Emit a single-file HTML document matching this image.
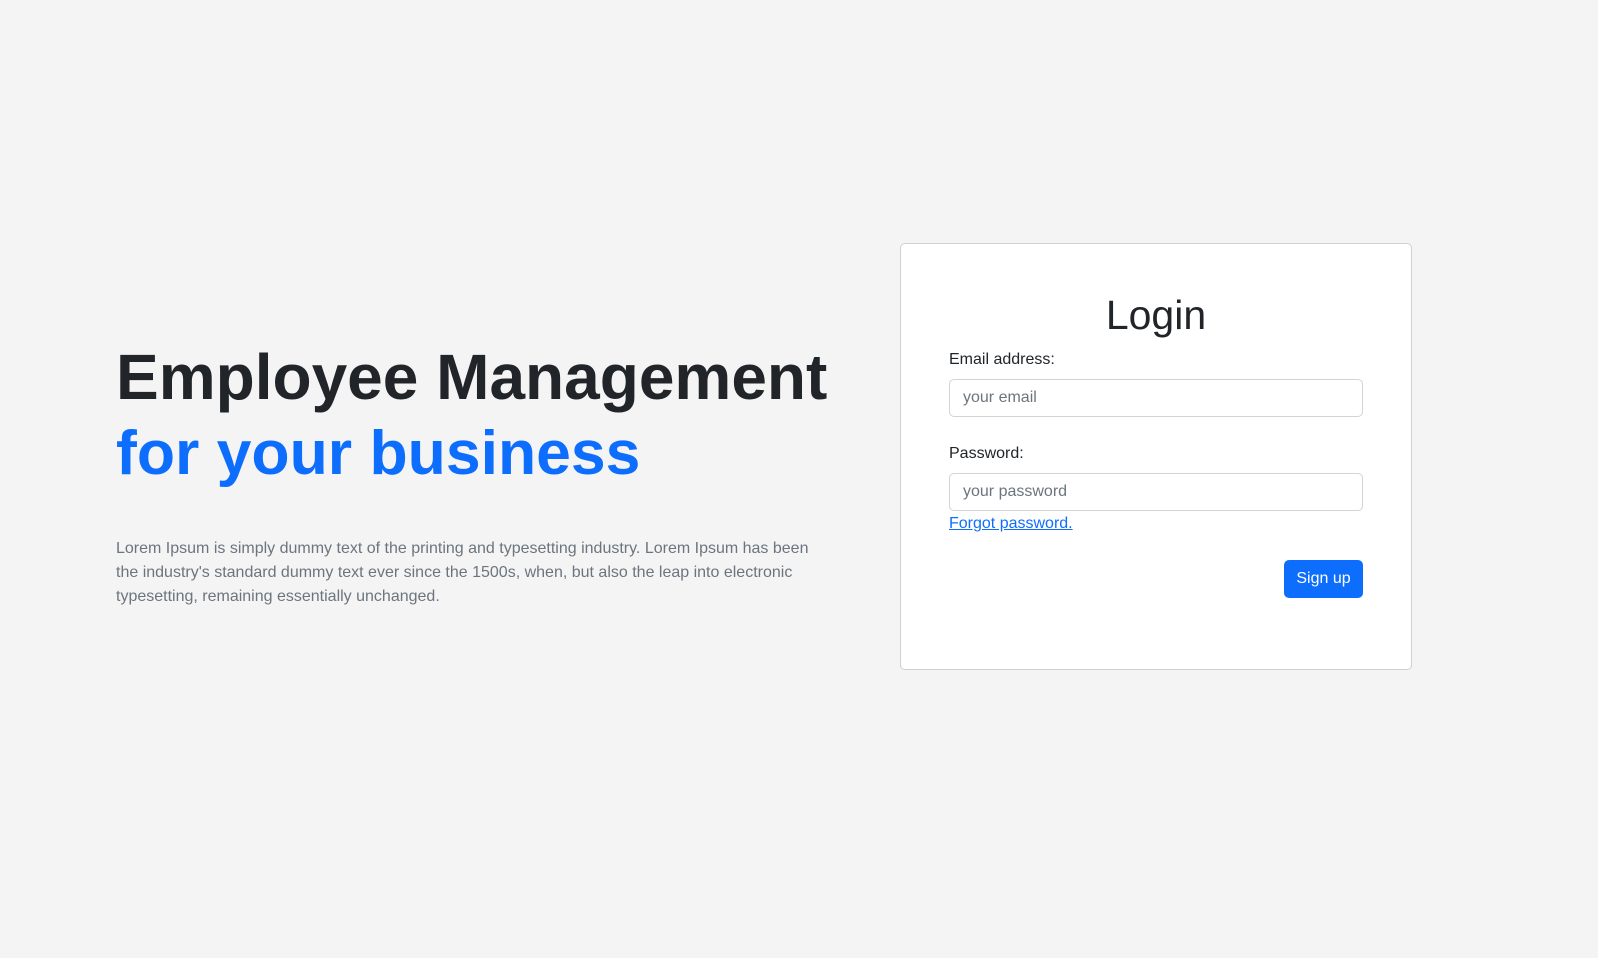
<!DOCTYPE html>
<html><head><style>
body{margin:0;width:1598px;height:972px;background:#fff;font-family:"Liberation Sans",sans-serif;position:relative;overflow:hidden}
.bg{position:absolute;left:0;top:0;width:1598px;height:958px;background:#f4f4f4}
.a{position:absolute;white-space:nowrap}
h1{margin:0;font-weight:bold;font-size:64px;line-height:76px;color:#212529}
.card{position:absolute;left:900px;top:243px;width:510px;height:425px;background:#fff;border:1px solid #d0d0d0;border-radius:5px}
.inp{position:absolute;left:949px;height:36px;border:1px solid #ced4da;border-radius:5px;background:#fff;color:#6c757d;font-size:16px;line-height:36px;padding-left:13px;width:399px}
.lbl{position:absolute;left:949px;font-size:16px;color:#212529}
</style></head><body>
<div class="bg"></div>
<h1 class="a" style="left:116px;top:339px">Employee Management</h1>
<h1 class="a" style="left:116px;top:415px;color:#0d6efd;font-size:62.5px">for your business</h1>
<div class="a" style="left:116px;top:537px;width:705px;white-space:normal;font-size:16px;line-height:24px;color:#6c757d">Lorem Ipsum is simply dummy text of the printing and typesetting industry. Lorem Ipsum has been the industry's standard dummy text ever since the 1500s, when, but also the leap into electronic typesetting, remaining essentially unchanged.</div>
<div class="card"></div>
<div class="a" style="left:900px;width:512px;top:292px;text-align:center;font-size:41px;color:#212529">Login</div>
<div class="lbl" style="top:351px">Email address:</div>
<div class="inp" style="top:379px">your email</div>
<div class="lbl" style="top:445px">Password:</div>
<div class="inp" style="top:473px">your password</div>
<div class="a" style="left:949px;top:515px;font-size:16px;color:#0d6efd;text-decoration:underline">Forgot password.</div>
<div class="a" style="left:1284px;top:560px;width:79px;height:38px;background:#0d6efd;border-radius:5px;color:#fff;font-size:16px;line-height:38px;text-align:center">Sign up</div>
</body></html>
